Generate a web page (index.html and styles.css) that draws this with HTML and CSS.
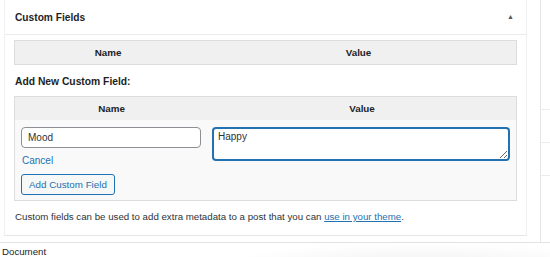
FILE: index.html
```html
<!DOCTYPE html>
<html lang="en">

<head>
    <meta charset="UTF-8">
    <meta name="viewport" content="width=device-width, initial-scale=1.0">
    <title>Custom Fields</title>
    <link rel="stylesheet" href="styles.css">
</head>

<body>
    <div class="layout">
        <div class="editor">
            <div class="postbox">
                <div class="postbox-header">
                    <h2>Custom Fields</h2>
                    <span class="toggle">&#9650;</span>
                </div>
                <div class="inside">
                    <table class="list-table">
                        <thead>
                            <tr>
                                <th class="left">Name</th>
                                <th>Value</th>
                            </tr>
                        </thead>
                    </table>

                    <p class="add-title">Add New Custom Field:</p>

                    <table class="list-table new-meta">
                        <thead>
                            <tr>
                                <th class="left">Name</th>
                                <th>Value</th>
                            </tr>
                        </thead>
                        <tbody>
                            <tr>
                                <td class="left">
                                    <input type="text" class="meta-key" value="Mood">
                                    <a href="#" class="cancel">Cancel</a>
                                    <button type="button" class="button">Add Custom Field</button>
                                </td>
                                <td class="right">
                                    <textarea class="meta-value" rows="2">Happy</textarea>
                                </td>
                            </tr>
                        </tbody>
                    </table>

                    <p class="description">Custom fields can be used to add extra metadata to a post that you can <a
                            href="#">use in your theme</a>.</p>
                </div>
            </div>
        </div>
        <div class="sidebar">
            <div class="sidebar-row first"></div>
            <div class="sidebar-row"></div>
            <div class="sidebar-row"></div>
        </div>
    </div>

    <div class="footer">
        <span>Document</span>
    </div>
</body>

</html>
```

FILE: styles.css
```css
body {
    font-family: "Liberation Sans", Arial, sans-serif;
    font-size: 9.7px;
    color: #1e1e1e;
    background-color: #fff;
    margin: 0;
    padding: 0;
}

.layout {
    display: flex;
    height: 242px;
}

.editor {
    width: 541px;
    padding-left: 4px;
    box-sizing: border-box;
    border-right: 1px solid #e6e6e6;
}

.postbox {
    width: 523px;
    height: 236px;
    box-sizing: border-box;
    border-left: 1px solid #f0f0f1;
    border-right: 1px solid #f0f0f1;
    border-bottom: 1px solid #e6e6e6;
}

.postbox-header {
    display: flex;
    align-items: center;
    justify-content: space-between;
    height: 35px;
    box-sizing: border-box;
    padding: 0 12px 0 10px;
    border-bottom: 1px solid #ebebeb;
}

.postbox-header h2 {
    margin: 0;
    font-size: 10.2px;
    font-weight: 600;
    color: #1d2327;
}

.toggle {
    font-size: 7px;
    color: #50575e;
    margin-top: -2px;
}

.inside {
    padding: 5px 9px 0 9px;
}

.list-table {
    width: 100%;
    border: 1px solid #dcdcde;
    border-collapse: collapse;
    background-color: #f9f9f9;
}

.list-table th {
    background-color: #f0f0f1;
    height: 23px;
    padding: 0;
    font-size: 9.8px;
    font-weight: 600;
    color: #1d2327;
    text-align: center;
}

.list-table .left {
    width: 186px;
}

.add-title {
    margin: 0;
    height: 31px;
    line-height: 33px;
    font-weight: 600;
    font-size: 10.3px;
    padding-left: 1px;
}

.new-meta td {
    vertical-align: top;
    padding: 7px 6px 5px 6px;
}

.new-meta td.left {
    padding-right: 4px;
}

.new-meta td.right {
    padding-left: 4px;
}

.meta-key {
    display: block;
    width: 180px;
    height: 21px;
    box-sizing: border-box;
    border: 1px solid #8c8f94;
    border-radius: 4px;
    padding: 0 6px;
    font-family: inherit;
    font-size: 10px;
    color: #2c3338;
    background: #fff;
}

.cancel {
    display: block;
    margin: 7px 0 7px 1px;
    color: #2271b1;
    text-decoration: none;
    font-size: 10px;
    line-height: 12px;
}

.button {
    display: block;
    height: 21px;
    padding: 0 7px;
    border: 1px solid #2271b1;
    border-radius: 3px;
    background-color: #f6f7f7;
    color: #2271b1;
    font-family: inherit;
    font-size: 9.8px;
    cursor: pointer;
}

.meta-value {
    display: block;
    width: 298px;
    height: 34px;
    box-sizing: border-box;
    border: 2px solid #2271b1;
    border-radius: 4px;
    padding: 2px 4px;
    font-family: inherit;
    font-size: 10px;
    color: #2c3338;
    background: #fff;
    resize: both;
    outline: none;
}

.description {
    margin: 10px 0 0 1px;
    font-size: 9.7px;
    color: #2c3338;
}

.description a {
    color: #2271b1;
}

.sidebar {
    flex: 1;
}

.sidebar-row {
    height: 32px;
    border-bottom: 1px solid #ececec;
}

.sidebar-row.first {
    height: 109px;
}

.footer {
    height: 14px;
    border-top: 1px solid #e2e2e2;
    padding-left: 2px;
    font-size: 9.7px;
    line-height: 17px;
    color: #1e1e1e;
    background: radial-gradient(ellipse 220px 30px at 420px 30px, #ececec, #fff);
}
```
